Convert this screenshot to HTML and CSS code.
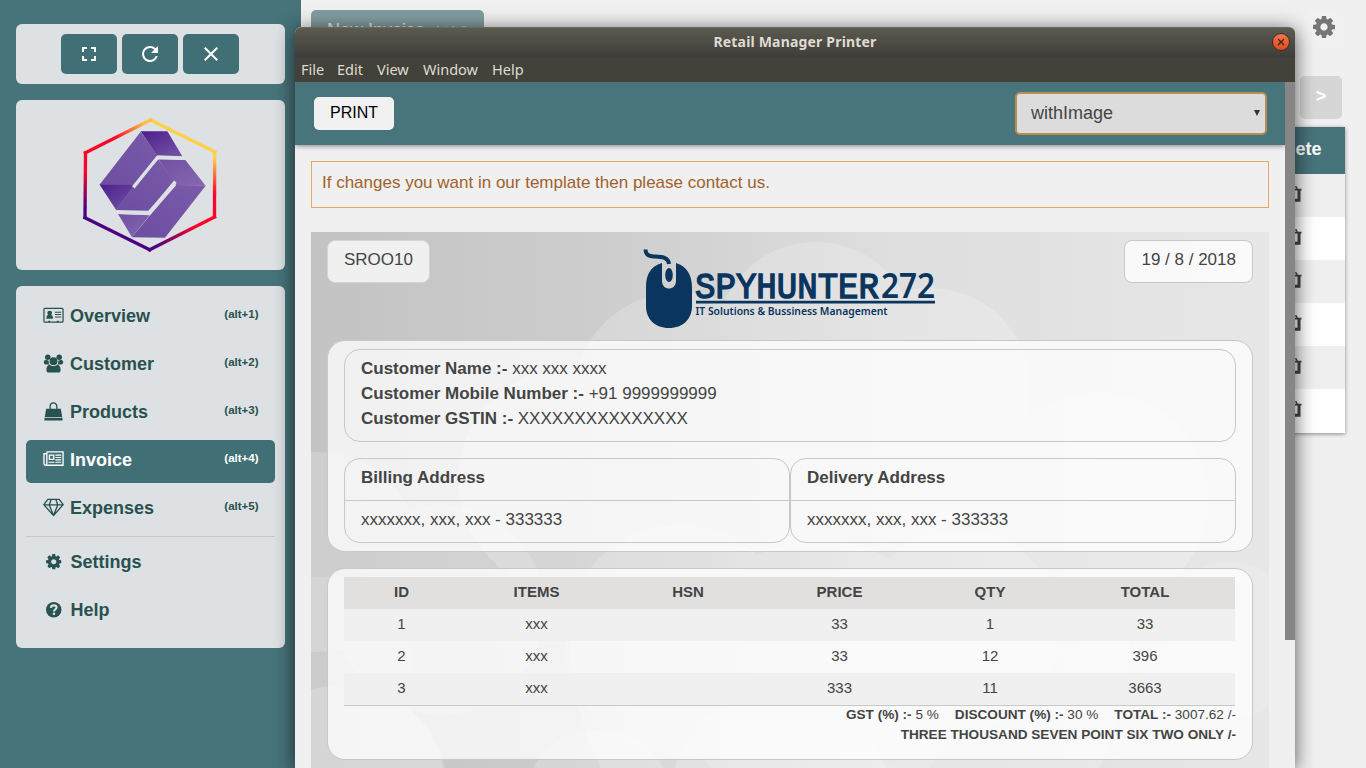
FILE: index.html
```html
<!DOCTYPE html>
<html lang="en">
<head>
<meta charset="utf-8">
<title>Retail Manager</title>
<link rel="stylesheet" href="styles.css">
</head>
<body>
<svg class="defs" width="0" height="0" aria-hidden="true">
  <symbol id="cog" viewBox="0 0 1536 1536"><path d="M1024 768q0-106-75-181t-181-75-181 75-75 181 75 181 181 75 181-75 75-181zm512-109v222q0 12-8 23t-20 13l-185 28q-19 54-39 91 35 50 107 138 10 12 10 25t-9 23q-27 37-99 108t-94 71q-12 0-26-9l-138-108q-44 23-91 38-16 136-29 186-7 28-36 28H657q-14 0-24.500-8.500T621 1506l-28-184q-49-16-90-37l-141 107q-10 9-25 9-14 0-25-11-126-114-165-168-7-10-7-23 0-12 8-23 15-21 51-66.500t54-70.500q-27-50-41-99L29 913q-13-2-21-12.500T0 877V655q0-12 8-23t19-13l186-28q14-46 39-92-40-57-107-138-10-12-10-24 0-10 9-23 26-36 98.500-107.500T337 135q13 0 26 10l138 107q44-23 91-38 16-136 29-186 7-28 36-28h222q14 0 24.500 8.500T915 30l28 184q49 16 90 37l142-107q9-9 24-9 13 0 25 10 129 119 165 170 7 8 7 22 0 12-8 23-15 21-51 66.500t-54 70.500q26 50 41 98l183 28q13 2 21 12.500t8 23.500z"/></symbol>
  <symbol id="trash" viewBox="0 0 16 16"><path fill="none" stroke="currentColor" stroke-width="3" d="M3.500 4v10.200h9.500V4"/><path d="M1 2.800h14.500v1.800H1zM7.300 5H9v9H7.300z"/><path fill="none" stroke="currentColor" stroke-width="1.300" d="M5.500 3.300 6.300.8h4l.9 2.500"/></symbol>
</svg>
<div class="app">
  <aside class="sidebar">
    <div class="panel controls">
      <button class="ctl"><svg width="24" height="24" viewBox="0 0 24 24"><path fill="#fff" d="M7 14H5v5h5v-2H7zM5 10h2V7h3V5H5zm12 7h-3v2h5v-5h-2zM14 5v2h3v3h2V5z"/></svg></button>
      <button class="ctl"><svg width="24" height="24" viewBox="0 0 24 24"><path fill="#fff" d="M17.650 6.350A7.960 7.960 0 0 0 12 4a8 8 0 1 0 7.730 10h-2.080A6 6 0 1 1 12 6c1.660 0 3.140.69 4.220 1.780L13 11h7V4z"/></svg></button>
      <button class="ctl"><svg width="24" height="24" viewBox="0 0 24 24"><path fill="#fff" d="M19 6.410 17.590 5 12 10.590 6.410 5 5 6.410 10.590 12 5 17.590 6.410 19 12 13.410 17.590 19 19 17.590 13.410 12z"/></svg></button>
    </div>
    <div class="panel brand">
      <svg width="160" height="150" viewBox="0 0 480 450">
        <defs>
          <linearGradient id="pa" x1="0" y1="1" x2="1" y2="0"><stop offset="0" stop-color="#6c4da0"/><stop offset="1" stop-color="#7a5aa9"/></linearGradient>
          <linearGradient id="pd" x1="0" y1="0" x2="1" y2="1"><stop offset="0" stop-color="#4d1c8c"/><stop offset="1" stop-color="#7457a5"/></linearGradient>
          <linearGradient id="pl" x1="0" y1="0" x2="1" y2="1"><stop offset="0" stop-color="#7050a3"/><stop offset="1" stop-color="#8568b1"/></linearGradient>
          <linearGradient id="r1" gradientUnits="userSpaceOnUse" x1="46" y1="128" x2="241" y2="30"><stop offset=".45" stop-color="#fb0529"/><stop offset=".9" stop-color="#ffc044"/></linearGradient>
          <linearGradient id="r2" gradientUnits="userSpaceOnUse" x1="0" y1="125" x2="0" y2="320"><stop offset=".1" stop-color="#ffd046"/><stop offset=".65" stop-color="#fb0529"/></linearGradient>
          <linearGradient id="r3" gradientUnits="userSpaceOnUse" x1="433" y1="320" x2="239" y2="420"><stop offset=".3" stop-color="#fb0529"/><stop offset=".9" stop-color="#4b0082"/></linearGradient>
          <linearGradient id="r4" gradientUnits="userSpaceOnUse" x1="0" y1="128" x2="0" y2="322"><stop offset=".3" stop-color="#fb0529"/><stop offset=".85" stop-color="#4b0082"/></linearGradient>
        </defs>
        <g fill="none" stroke-width="10" stroke-linecap="square">
          <path stroke="url(#r4)" d="m46.500 128-1.500 194"/><path stroke="#4b0082" d="m45 323 194 96"/><path stroke="url(#r3)" d="m239 419 194.500-98"/><path stroke="url(#r2)" d="m434 125-.5 195"/><path stroke="#ffd046" d="m242 30 192 95"/><path stroke="url(#r1)" d="m46.500 128 195-98"/>
        </g>
        <path fill="url(#pa)" d="m212 65 50 72-72 94-102-6z"/>
        <path fill="url(#pd)" d="M212 64h80l45 75-77-3z"/>
        <path fill="url(#pd)" d="m89 224 105 1-55 76z"/>
        <path fill="url(#pa)" d="m265 148 48 66-78 88-96-2 54-75z"/>
        <path fill="url(#pl)" d="m265 147 81 3 61 77h-87z"/>
        <path fill="url(#pl)" d="m144 312 95 4-53 66z"/>
        <path fill="url(#pa)" d="m319 225 88 2-122 156-99-1 53-65z"/>
        <path fill="none" stroke="#dde1e4" stroke-width="10" d="m190 232 72-89 75 2M140 307l98 3 78-95"/>
      </svg>
    </div>
    <nav class="panel nav">
      <a class="item"><svg class="ico" viewBox="0 0 22 18"><rect x="1" y="1.500" width="20" height="14.500" rx="1" fill="none" stroke="currentColor" stroke-width="1.300"/><circle cx="7" cy="6.500" r="2.500"/><path d="M3.500 12.500c0-3 1-4 2-4h3c1 0 2 1 2 4zM12.500 5h6.500v1h-6.500zm0 2.500h6.500v1h-6.500zm0 2.500h6.500v1.200h-6.500zM5.500 14.500h2v1.500h-2zm9 0h2v1.500h-2z"/></svg><span>Overview</span><small>(alt+1)</small></a>
      <a class="item"><svg class="ico" viewBox="0 0 22 20"><circle cx="5" cy="3.500" r="2.900"/><circle cx="17" cy="3.500" r="2.900"/><path d="M.8 9c0-2 1-3 2.200-3l3 1c0 2 0 3 1 4H3C1.300 11 .8 10 .8 9zm20.400 0c0-2-1-3-2.200-3l-3 1c0 2 0 3-1 4h4c1.700 0 2.200-1 2.200-2z"/><circle cx="11" cy="7.500" r="4.100"/><path d="M3.500 16.800c0-3 1.500-5.500 3.500-5.500 2 1.700 6 1.700 8 0 2 0 3.500 2.500 3.500 5.500 0 1.700-1 2.700-2.500 2.700H6c-1.500 0-2.500-1-2.500-2.700z"/></svg><span>Customer</span><small>(alt+2)</small></a>
      <a class="item"><svg class="ico" viewBox="0 0 22 20"><path d="M3.300 7h15.400l1.500 8.700H1.800zM1.500 16.600h19v2.900h-19z"/><path d="M7.500 9V4.500a3.500 3.500 0 0 1 7 0V9" fill="none" stroke="currentColor" stroke-width="1.400"/></svg><span>Products</span><small>(alt+3)</small></a>
      <a class="item active"><svg class="ico" viewBox="0 0 22 18"><path fill="none" stroke="currentColor" stroke-width="1.400" d="M4 1h17v14H3c-1.300 0-2-.7-2-2V3h3m0-2v12c0 1-.3 2-1.500 2"/><path fill="none" stroke="currentColor" stroke-width="1.400" d="M6.700 4.500h4.500v4.300H6.700z"/><path d="M13 3.800h6V5h-6zm0 2.500h6v1.200h-6zm0 2.500h6V10h-6zm-7.200 2.500H12v1.200H5.800zm7.200 0h6v1.200h-6z"/></svg><span>Invoice</span><small>(alt+4)</small></a>
      <a class="item"><svg class="ico" viewBox="0 0 22 20"><path fill="none" stroke="currentColor" stroke-width="1.400" stroke-linejoin="round" d="M5 1.500h12L21.200 7 11 18.500.8 7zM1 7.300h20M11 18.500 6.500 7.300l2-5.800M11 18.500l4.500-11.200-2-5.800"/></svg><span>Expenses</span><small>(alt+5)</small></a>
      <hr class="rule">
      <a class="item"><svg class="ico small"><use href="#cog"/></svg><span>Settings</span></a>
      <a class="item"><svg class="ico small" viewBox="0 0 16 16"><circle cx="8" cy="8" r="8"/><path fill="none" stroke="#dde1e4" stroke-width="2.200" d="M5 6c.2-1.800 1.300-2.500 3-2.500s2.900.9 2.900 2.300c0 1.900-2.700 1.700-2.700 4"/><path fill="#dde1e4" d="M7 11h2.400v2.300H7z"/></svg><span>Help</span></a>
    </nav>
  </aside>
  <main class="page">
    <div class="page-top">
      <button class="new">New Invoice <small>(ctrl+I)</small></button>
      <div class="gear"><svg width="22" height="22"><use href="#cog"/></svg></div>
    </div>
    <div class="pager"><button class="next">&gt;</button></div>
    <div class="list">
      <div class="list-head">Delete</div>
      <div class="list-row"><svg><use href="#trash"/></svg></div>
      <div class="list-row"><svg><use href="#trash"/></svg></div>
      <div class="list-row"><svg><use href="#trash"/></svg></div>
      <div class="list-row"><svg><use href="#trash"/></svg></div>
      <div class="list-row"><svg><use href="#trash"/></svg></div>
      <div class="list-row"><svg><use href="#trash"/></svg></div>
    </div>
  </main>
</div>

<section class="window">
  <header class="titlebar"><span class="title">Retail Manager Printer</span>
    <span class="close"><svg width="8" height="8" viewBox="0 0 8 8"><path d="m1 1 6 6M7 1 1 7" stroke="#40200f" stroke-width="1.300"/></svg></span></header>
  <div class="menubar"><span>File</span><span>Edit</span><span>View</span><span>Window</span><span>Help</span></div>
  <div class="viewport">
    <div class="doc">
      <div class="toolbar"><button class="print">PRINT</button><div class="select"><span>withImage</span><svg width="6" height="7" viewBox="0 0 6 7"><path d="M0 0h6L3 6z" fill="#333"/></svg></div></div>
      <div class="content">
        <p class="notice">If changes you want in our template then please contact us.</p>
        <div class="invoice">
          <svg class="clouds" width="958" height="536" viewBox="311 232 958 536">
            <defs><linearGradient id="bg"><stop offset="0" stop-color="#c3c3c3"/><stop offset=".3" stop-color="#cdcdcd"/><stop offset=".6" stop-color="#dedede"/><stop offset="1" stop-color="#e7e7e7"/></linearGradient></defs>
            <path fill="url(#bg)" d="M311 232h958v536H311z"/>
            <g fill="#fff">
              <g opacity=".2"><circle cx="680" cy="400" r="108"/><circle cx="816" cy="342" r="100"/><circle cx="930" cy="388" r="100"/><circle cx="1100" cy="500" r="108"/><circle cx="570" cy="480" r="112"/><circle cx="850" cy="640" r="280"/></g>
              <g opacity=".18"><circle cx="318" cy="552" r="100"/><circle cx="440" cy="610" r="105"/></g>
              <g opacity=".14"><circle cx="320" cy="670" r="93"/><circle cx="350" cy="780" r="93"/></g>
              <g opacity=".18"><circle cx="680" cy="640" r="115"/><circle cx="960" cy="630" r="100"/><circle cx="820" cy="680" r="140"/></g>
              <g opacity=".2"><circle cx="342" cy="790" r="105"/><circle cx="598" cy="805" r="75"/><circle cx="780" cy="800" r="110"/></g>
              <circle cx="1230" cy="640" r="78" opacity=".12"/>
            </g>
          </svg>
          <div class="inv-head">
            <div class="tag tag-id">SROO10</div>
            <svg class="logo" width="300" height="84" viewBox="0 0 300 84">
              <g fill="#09355f">
                <path d="M20 16C8 19 4 29 4 40v19c0 13 9 22 23 22s23-9 23-22V40c0-11-5-21-16-24v18c0 10-14 10-14 0z"/>
                <ellipse cx="27" cy="28" rx="3.800" ry="7"/>
                <path d="M3.500 2.500c0 5 3 6.800 8 7 7 .3 15 0 15.500 7.500" fill="none" stroke="#09355f" stroke-width="4"/>
                <text class="logo-mono" x="53" y="50.500" textLength="184" lengthAdjust="spacingAndGlyphs">SPYHUNTER</text>
                <text class="logo-num" x="239" y="50.500" textLength="54" lengthAdjust="spacingAndGlyphs">272</text>
                <path d="M54 53.800h239v2.700H54z"/>
                <text class="logo-sub" x="53.500" y="67.500" textLength="192" lengthAdjust="spacingAndGlyphs">IT Solutions &amp; Bussiness Management</text>
              </g>
            </svg>
            <div class="tag">19 / 8 / 2018</div>
          </div>
          <div class="card info">
            <div class="customer">
              <div><b>Customer Name :-</b> xxx xxx xxxx</div>
              <div><b>Customer Mobile Number :-</b> +91 9999999999</div>
              <div><b>Customer GSTIN :-</b> XXXXXXXXXXXXXXX</div>
            </div>
            <div class="addresses">
              <div class="address"><b>Billing Address</b><span>xxxxxxx, xxx, xxx - 333333</span></div>
              <div class="address"><b>Delivery Address</b><span>xxxxxxx, xxx, xxx - 333333</span></div>
            </div>
          </div>
          <div class="card items">
            <table class="table">
              <colgroup><col class="c1"><col class="c2"><col class="c3"><col class="c4"><col class="c5"><col class="c6"></colgroup>
              <thead><tr><th>ID</th><th>ITEMS</th><th>HSN</th><th>PRICE</th><th>QTY</th><th>TOTAL</th></tr></thead>
              <tbody>
                <tr><td>1</td><td>xxx</td><td></td><td>33</td><td>1</td><td>33</td></tr>
                <tr><td>2</td><td>xxx</td><td></td><td>33</td><td>12</td><td>396</td></tr>
                <tr><td>3</td><td>xxx</td><td></td><td>333</td><td>11</td><td>3663</td></tr>
              </tbody>
            </table>
            <div class="sums"><span><b>GST (%) :-</b> 5 %</span><span><b>DISCOUNT (%) :-</b> 30 %</span><span><b>TOTAL :-</b> 3007.62 /-</span></div>
            <div class="words">THREE THOUSAND SEVEN POINT SIX TWO ONLY /-</div>
          </div>
        </div>
      </div>
    </div>
    <div class="scroll"><div class="thumb"></div></div>
  </div>
</section>
</body>
</html>
```
FILE: styles.css
```css
* { box-sizing: border-box; }
body { margin: 0; width: 1366px; height: 768px; overflow: hidden; position: relative; background: #f0f0f0; font-family: "Liberation Sans", Arial, sans-serif; color: #444; }
button { border: 0; padding: 0; font-family: inherit; }
svg { display: block; fill: currentColor; flex: none; }
.defs { position: absolute; }
.app { display: flex; height: 768px; }

.sidebar { width: 301px; flex: none; background: #47737a; padding: 24px 16px; display: flex; flex-direction: column; gap: 16px; }
.panel { background: #dde1e4; border-radius: 6px; }
.controls { height: 60px; display: flex; gap: 5px; padding: 10px 0 0 45px; }
.ctl { width: 56px; height: 40px; border-radius: 5px; background: #416f76; display: flex; align-items: center; justify-content: center; }
.brand { height: 170px; padding: 10px 0 0 54px; }
.nav { height: 362px; padding: 10px; color: #28524f; }
.item { display: flex; height: 43px; margin-bottom: 5px; padding: 0 16.500px 0 17px; border-radius: 5px; font-size: 18px; font-weight: bold; line-height: 41px; }
.item small { margin-left: auto; font-size: 11.500px; line-height: 37px; }
.active { background: #416f76; color: #fff; }
.ico { width: 21px; height: 19px; margin: 10px 6px 0 0; }
.ico.small { width: 15.500px; height: 15.500px; margin: 12px 9px 0 3px; }
.rule { height: 1px; border: 0; margin: 0 0 5px; background: #c5c8c9; }

.page { flex: 1; padding: 10px 21px 0 10px; display: flex; flex-direction: column; }
.page-top { height: 66px; display: flex; justify-content: space-between; }
.new { width: 173px; height: 43px; border-radius: 5px; background: #829da1; color: #e9eeee; font-size: 18px; padding-bottom: 3px; }
.new small { font-size: 11.500px; margin-left: 5px; vertical-align: 2px; }
.gear { width: 42px; height: 39px; border-radius: 12px; background: #f1f1f1; color: #767676; padding: 6px 10px; }
.pager { height: 51px; display: flex; justify-content: flex-end; padding-right: 3px; }
.next { width: 42px; height: 43px; border-radius: 5px; background: #d6d6d6; color: #fff; font-size: 18px; font-weight: bold; padding-bottom: 3px; }
.list { width: 1034px; height: 306px; background: #fff; box-shadow: 0 1px 4px #888; }
.list-head { height: 47px; background: #47737a; color: #fff; font-size: 18px; font-weight: bold; line-height: 44px; text-align: right; padding-right: 23.500px; }
.list-row { height: 43px; display: flex; justify-content: flex-end; padding: 12px 43px 0 0; }
.list-row:nth-child(even) { background: #efefef; }
.list-row svg { width: 16px; height: 16px; }

.window { position: absolute; left: 295px; top: 27px; width: 1000px; height: 741px; background: #f0f0f0; border-radius: 6px 6px 0 0; box-shadow: 0 3px 20px rgba(0,0,0,.65); }
.titlebar { height: 30px; display: flex; align-items: center; justify-content: flex-end; border-radius: 6px 6px 0 0; background: linear-gradient(#5c5b50, #3f3d38); border-top: 1px solid #68685b; padding-right: 5px; }
.title { flex: 1; text-align: center; padding: 0 0 2px 23px; color: #dfdbd2; font: bold 14px "Noto Sans", sans-serif; letter-spacing: .18px; }
.close { width: 18px; height: 18px; border-radius: 50%; border: 1px solid #3b2f29; background: linear-gradient(#f3734f, #de4c1c); display: flex; align-items: center; justify-content: center; margin-bottom: 1px; }
.menubar { height: 25px; background: #42423b; color: #dfdbd2; display: grid; grid-template-columns: 24px 28px 34px 57px 32px; gap: 12px; padding-left: 6px; font: 14.500px/24px "Noto Sans", sans-serif; white-space: nowrap; }
.viewport { height: 686px; display: flex; overflow: hidden; }
.doc { width: 990px; }
.scroll { width: 10px; }
.thumb { height: 558px; background: #868686; }
.toolbar { height: 63px; background: #48747b; box-shadow: 0 1px 5px rgba(0,0,0,.45); display: flex; justify-content: space-between; align-items: center; padding: 0 18px 0 19px; }
.print { width: 80px; height: 33px; border-radius: 5px; background: #f1f1f1; color: #000; font-size: 16px; padding-bottom: 2px; }
.select { width: 252px; height: 43px; background: #dcdcdc; border: 2px solid #b88d54; border-radius: 5px; display: flex; align-items: center; justify-content: space-between; padding: 0 5px 0 14px; font-size: 18px; }
.content { padding: 16px 16px 0; }
.notice { margin: 0 0 24px; height: 47px; border: 1px solid #e5a762; color: #a0622d; font-size: 17px; line-height: 42px; padding-left: 10px; }
.invoice { position: relative; height: 570px; padding: 8px 16px 0; font-size: 17px; }
.clouds { position: absolute; left: 0; top: 0; }
.inv-head { position: relative; height: 100px; display: flex; justify-content: space-between; align-items: flex-start; }
.tag { height: 43px; background: rgba(255,255,255,.78); border: 1px solid #c8c8c8; border-radius: 8px; padding: 0 16px; line-height: 37px; }
.tag-id { background: #f0f0f0; border-color: #d4d4d4; }
.logo { margin: 7px 0 0 30px; }
.logo-mono { font: 37px "Liberation Mono", monospace; stroke: #09355f; stroke-width: 1.500px; }
.logo-num { font: 600 34px "Noto Sans", sans-serif; }
.logo-sub { font: 600 11.500px "Noto Sans", sans-serif; }
.card { position: relative; background: rgba(255,255,255,.76); border: 1px solid #c8c8c8; border-radius: 18px; }
.info { height: 212px; padding: 8px 16px; margin-bottom: 16px; }
.customer { height: 93px; border: 1px solid #c8c8c8; border-radius: 16px; padding: 6px 16px; line-height: 25px; margin-bottom: 16px; }
.addresses { display: flex; }
.address { width: 446px; height: 85px; border: 1px solid #c8c8c8; border-radius: 16px; display: flex; flex-direction: column; }
.address b { height: 42px; line-height: 37px; padding-left: 16px; border-bottom: 1px solid #c8c8c8; }
.address span { line-height: 37px; padding-left: 16px; }
.items { height: 192px; padding: 8px 16px; }
.table { width: 891px; table-layout: fixed; border-collapse: collapse; font-size: 15px; text-align: center; border-bottom: 1px solid #c8c8c8; }
.table th, .table td { height: 32px; padding: 0 0 3px; }
.table th:first-child, .table td:first-child { padding-left: 8px; }
.table thead tr { background: #e1e0de; }
.table tbody tr:nth-child(odd) { background: #f0f0f0; }
.c1 { width: 107px; } .c2 { width: 171px; } .c3 { width: 132px; } .c4 { width: 171px; } .c5 { width: 130px; } .c6 { width: 180px; }
.sums { display: flex; justify-content: flex-end; gap: 16px; font-size: 13.600px; line-height: 18px; }
.words { text-align: right; font-size: 13.600px; font-weight: bold; line-height: 22px; }
```
